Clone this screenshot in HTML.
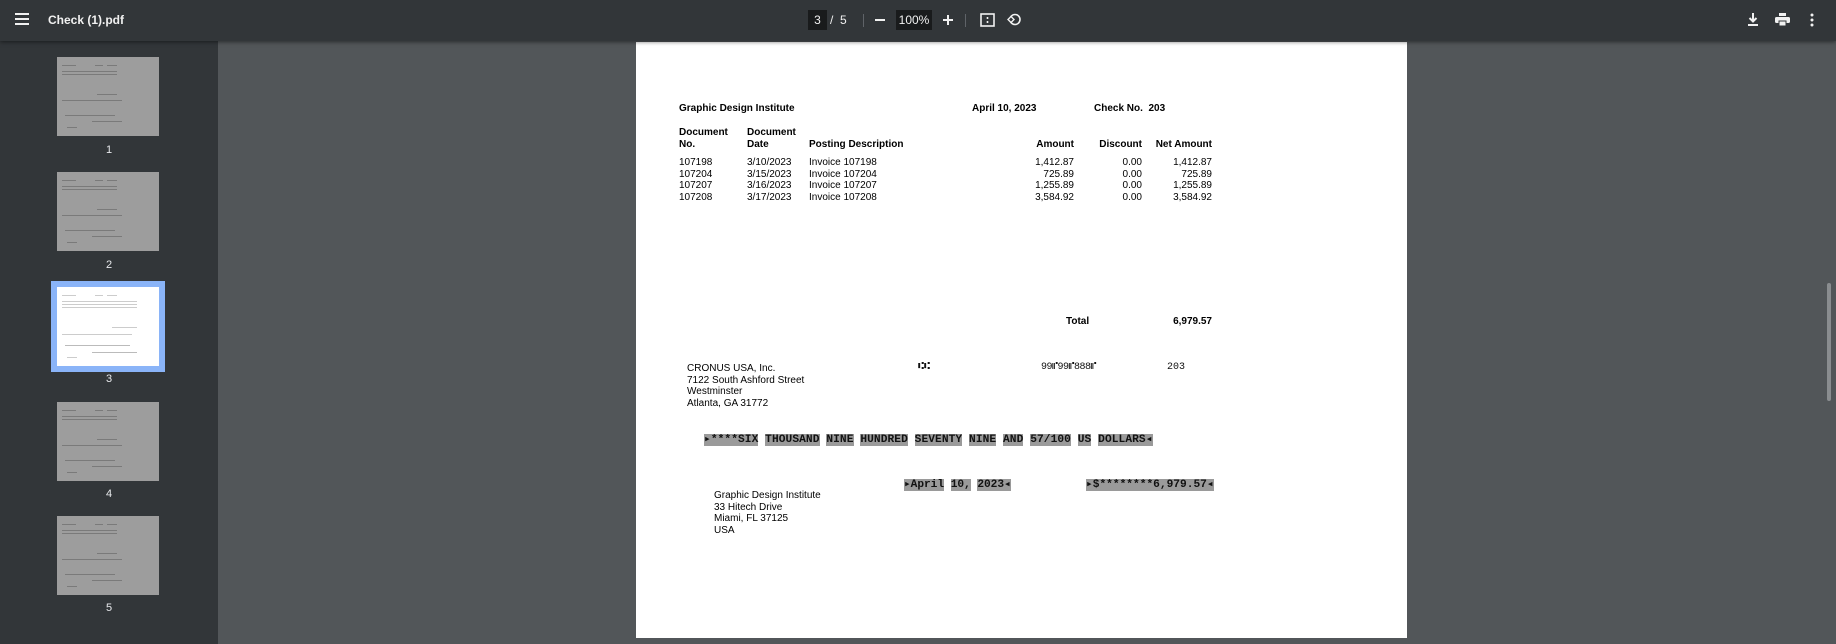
<!DOCTYPE html>
<html><head><meta charset="utf-8"><style>
*{margin:0;padding:0;box-sizing:border-box}
body{width:1836px;height:644px;overflow:hidden;background:#525659;font-family:"Liberation Sans",sans-serif;position:relative}
.tb{position:absolute;left:0;top:0;width:1836px;height:41px;background:#323639;box-shadow:0 1px 4px rgba(0,0,0,.5);z-index:5;color:#f1f1f1;font-size:13px}
.side{position:absolute;left:0;top:41px;width:218px;height:603px;background:#323639}
.a{position:absolute;white-space:nowrap}
.th{position:absolute;left:57px;width:102px;height:79px;background:#9d9d9d}
.th i{position:absolute;height:1px;background:#7a7a7a}
.lbl{position:absolute;left:0;width:218px;text-align:center;color:#e8eaed;font-size:11px}
.page{position:absolute;left:636px;top:42px;width:771px;height:596px;background:#fff}
.t{position:absolute;white-space:nowrap;font-size:10px;line-height:12px;color:#000}
.b{font-weight:bold}
.r{text-align:right}
.m{position:absolute;white-space:nowrap;font-family:"Liberation Mono",monospace;font-size:11.2px;line-height:12px;color:#111}
.m span{background:#9a9a9a;font-weight:bold}
</style></head><body>
<div class="tb">
  <svg class="a" style="left:15px;top:13px" width="14" height="12"><rect y="0" width="14" height="2" fill="#f1f1f1"/><rect y="5" width="14" height="2" fill="#f1f1f1"/><rect y="10" width="14" height="2" fill="#f1f1f1"/></svg>
  <div class="a" style="left:48px;top:13px;font-size:12px;font-weight:bold">Check (1).pdf</div>
  <div class="a" style="left:808px;top:10px;width:19px;height:20px;background:#191b1c;text-align:center;line-height:20px;font-size:12px">3</div>
  <div class="a" style="left:830px;top:13px;font-size:12px">/&nbsp;&nbsp;5</div>
  <div class="a" style="left:863px;top:14px;width:1px;height:13px;background:#5f6368"></div>
  <div class="a" style="left:875px;top:19px;width:10px;height:2px;background:#f1f1f1"></div>
  <div class="a" style="left:896px;top:10px;width:36px;height:20px;background:#191b1c;text-align:center;line-height:20px;font-size:12px">100%</div>
  <div class="a" style="left:943px;top:19px;width:10px;height:2px;background:#f1f1f1"></div>
  <div class="a" style="left:947px;top:15px;width:2px;height:10px;background:#f1f1f1"></div>
  <div class="a" style="left:965px;top:14px;width:1px;height:13px;background:#5f6368"></div>
  <svg class="a" style="left:980px;top:13px" width="15" height="14"><rect x="1" y="1" width="13" height="12" fill="none" stroke="#f1f1f1" stroke-width="1.6"/><path d="M7.5 4v2M7.5 8v2" stroke="#f1f1f1" stroke-width="1.6"/></svg>
  <svg class="a" style="left:1006px;top:11px" width="16" height="16"><circle cx="9" cy="8.5" r="5" fill="none" stroke="#f1f1f1" stroke-width="1.6"/><path d="M2 8.5l3-3 3 3-3 3z" fill="#323639" stroke="#f1f1f1" stroke-width="1.4"/></svg>
  <svg class="a" style="left:1747px;top:13px" width="12" height="14"><path d="M6 0v8M2.5 5l3.5 3.5L9.5 5" stroke="#f1f1f1" stroke-width="2" fill="none"/><rect x="1" y="11" width="10" height="2" fill="#f1f1f1"/></svg>
  <svg class="a" style="left:1775px;top:13px" width="15" height="14"><rect x="4" y="0" width="7" height="3" fill="#f1f1f1"/><rect x="0" y="4" width="15" height="6" rx="1.5" fill="#f1f1f1"/><rect x="4" y="8" width="7" height="5" fill="#f1f1f1" stroke="#323639" stroke-width="1"/></svg>
  <svg class="a" style="left:1810px;top:13px" width="4" height="14"><circle cx="2" cy="2" r="1.5" fill="#f1f1f1"/><circle cx="2" cy="7" r="1.5" fill="#f1f1f1"/><circle cx="2" cy="12" r="1.5" fill="#f1f1f1"/></svg>
</div>
<div class="side"></div>
<div class="a" style="left:51px;top:281px;width:114px;height:91px;background:#8ab4f8"></div>
<div class="th" style="top:57px"><i style="left:5px;top:8px;width:14px"></i><i style="left:38px;top:8px;width:8px"></i><i style="left:50px;top:8px;width:10px"></i><i style="left:5px;top:14px;width:55px"></i><i style="left:5px;top:17px;width:55px"></i><i style="left:40px;top:37px;width:20px"></i><i style="left:5px;top:43px;width:60px"></i><i style="left:8px;top:58px;width:50px"></i><i style="left:35px;top:64px;width:30px"></i><i style="left:10px;top:70px;width:10px"></i></div>
<div class="lbl" style="top:144px">1</div>
<div class="th" style="top:172px"><i style="left:5px;top:8px;width:14px"></i><i style="left:38px;top:8px;width:8px"></i><i style="left:50px;top:8px;width:10px"></i><i style="left:5px;top:14px;width:55px"></i><i style="left:5px;top:17px;width:55px"></i><i style="left:40px;top:37px;width:20px"></i><i style="left:5px;top:43px;width:60px"></i><i style="left:8px;top:58px;width:50px"></i><i style="left:35px;top:64px;width:30px"></i><i style="left:10px;top:70px;width:10px"></i></div>
<div class="lbl" style="top:259px">2</div>
<div class="th" style="top:287px;background:#fff"><i style="left:5px;top:8px;width:14px;background:#ccc"></i><i style="left:38px;top:8px;width:8px;background:#ccc"></i><i style="left:50px;top:8px;width:10px;background:#ccc"></i><i style="left:5px;top:14px;width:75px;background:#ccc"></i><i style="left:5px;top:17px;width:75px;background:#ccc"></i><i style="left:5px;top:20px;width:75px;background:#ccc"></i><i style="left:55px;top:40px;width:25px;background:#ccc"></i><i style="left:5px;top:47px;width:70px;background:#ccc"></i><i style="left:8px;top:58px;width:65px;background:#bbb"></i><i style="left:35px;top:65px;width:45px;background:#bbb"></i><i style="left:10px;top:70px;width:10px;background:#ccc"></i></div>
<div class="lbl" style="top:373px">3</div>
<div class="th" style="top:402px"><i style="left:5px;top:8px;width:14px"></i><i style="left:38px;top:8px;width:8px"></i><i style="left:50px;top:8px;width:10px"></i><i style="left:5px;top:14px;width:55px"></i><i style="left:5px;top:17px;width:55px"></i><i style="left:40px;top:37px;width:20px"></i><i style="left:5px;top:43px;width:60px"></i><i style="left:8px;top:58px;width:50px"></i><i style="left:35px;top:64px;width:30px"></i><i style="left:10px;top:70px;width:10px"></i></div>
<div class="lbl" style="top:488px">4</div>
<div class="th" style="top:516px"><i style="left:5px;top:8px;width:14px"></i><i style="left:38px;top:8px;width:8px"></i><i style="left:50px;top:8px;width:10px"></i><i style="left:5px;top:14px;width:55px"></i><i style="left:5px;top:17px;width:55px"></i><i style="left:40px;top:37px;width:20px"></i><i style="left:5px;top:43px;width:60px"></i><i style="left:8px;top:58px;width:50px"></i><i style="left:35px;top:64px;width:30px"></i><i style="left:10px;top:70px;width:10px"></i></div>
<div class="lbl" style="top:602px">5</div>

<div class="a" style="left:1827px;top:283px;width:4px;height:118px;background:#8a8d90;border-radius:2px"></div>

<div class="page">
  <div class="t b" style="left:43px;top:61px">Graphic Design Institute</div>
  <div class="t b" style="left:336px;top:61px">April 10, 2023</div>
  <div class="t b" style="left:458px;top:61px">Check No.&nbsp; 203</div>
  <div class="t b" style="left:43px;top:85px">Document<br>No.</div>
  <div class="t b" style="left:111px;top:85px">Document<br>Date</div>
  <div class="t b" style="left:173px;top:97px">Posting Description</div>
  <div class="t b r" style="right:333px;top:97px">Amount</div>
  <div class="t b r" style="right:265px;top:97px">Discount</div>
  <div class="t b r" style="right:195px;top:97px">Net Amount</div>
  <div class="t" style="left:43px;top:115px;line-height:11.7px">107198<br>107204<br>107207<br>107208</div>
  <div class="t" style="left:111px;top:115px;line-height:11.7px">3/10/2023<br>3/15/2023<br>3/16/2023<br>3/17/2023</div>
  <div class="t" style="left:173px;top:115px;line-height:11.7px">Invoice 107198<br>Invoice 107204<br>Invoice 107207<br>Invoice 107208</div>
  <div class="t r" style="right:333px;top:115px;line-height:11.7px">1,412.87<br>725.89<br>1,255.89<br>3,584.92</div>
  <div class="t r" style="right:265px;top:115px;line-height:11.7px">0.00<br>0.00<br>0.00<br>0.00</div>
  <div class="t r" style="right:195px;top:115px;line-height:11.7px">1,412.87<br>725.89<br>1,255.89<br>3,584.92</div>
  <div class="t b" style="left:430px;top:274px">Total</div>
  <div class="t b r" style="right:195px;top:274px">6,979.57</div>
  <div class="t" style="left:51px;top:321px;line-height:11.7px">CRONUS USA, Inc.<br>7122 South Ashford Street<br>Westminster<br>Atlanta, GA 31772</div>
  <div class="m" style="left:282px;top:320px;font-size:10px">⑆⑆</div>
  <div class="m" style="left:405px;top:320px;font-size:10px;letter-spacing:-0.5px">99⑈99⑈888⑈</div>
  <div class="m" style="left:531px;top:320px;font-size:10px">203</div>
  <div class="m" style="left:68px;top:392px;letter-spacing:0.08px"><span>▸****SIX</span> <span>THOUSAND</span> <span>NINE</span> <span>HUNDRED</span> <span>SEVENTY</span> <span>NINE</span> <span>AND</span> <span>57/100</span> <span>US</span> <span>DOLLARS◂</span></div>
  <div class="m" style="left:268px;top:437px;letter-spacing:-0.05px"><span>▸April</span> <span>10,</span> <span>2023◂</span></div>
  <div class="m" style="left:450px;top:437px;letter-spacing:0px"><span>▸$********6,979.57◂</span></div>
  <div class="t" style="left:78px;top:448px;line-height:11.7px">Graphic Design Institute<br>33 Hitech Drive<br>Miami, FL 37125<br>USA</div>
</div>
</body></html>
